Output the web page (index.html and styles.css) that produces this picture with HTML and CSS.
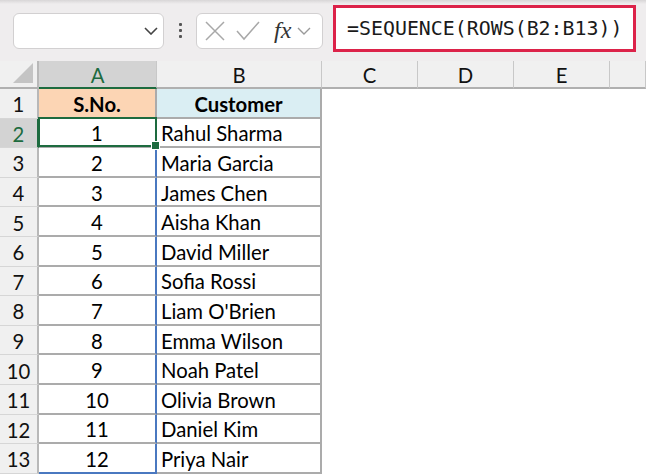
FILE: index.html
```html
<!DOCTYPE html>
<html lang="en">

<head>
	<meta charset="utf-8">
	<title>Sheet</title>
	<link rel="stylesheet" href="styles.css">
</head>

<body>
	<div class="toolbar">
		<div class="namebox">
			<svg class="chev" width="14" height="8" viewBox="0 0 14 8"><path d="M1 1 L7 7 L13 1" fill="none" stroke="#444" stroke-width="1.6"/></svg>
		</div>
		<div class="grip"><i></i><i></i><i></i></div>
		<div class="fxbox">
			<svg width="22" height="22" viewBox="0 0 22 22"><path d="M2 2 L20 20 M20 2 L2 20" stroke="#a8a8a8" stroke-width="1.5"/></svg>
			<svg width="24" height="22" viewBox="0 0 24 22"><path d="M1 11 L8 19 L23 2" fill="none" stroke="#a8a8a8" stroke-width="1.5"/></svg>
			<span class="fx">fx</span>
			<svg width="14" height="8" viewBox="0 0 14 8"><path d="M1 1 L7 7 L13 1" fill="none" stroke="#9a9a9a" stroke-width="1.4"/></svg>
		</div>
		<div class="formula">=SEQUENCE(ROWS(B2:B13))</div>
	</div>
	<div class="sheet" id="sheet">
		<div class="hd corner"><span class="tri"></span></div>
		<div class="hd col sel">A</div>
		<div class="hd col">B</div>
		<div class="hd col">C</div>
		<div class="hd col">D</div>
		<div class="hd col">E</div>
		<div class="hd col last"></div>
	</div>
	<script>
		var names = ["Rahul Sharma", "Maria Garcia", "James Chen", "Aisha Khan", "David Miller", "Sofia Rossi",
			"Liam O'Brien", "Emma Wilson", "Noah Patel", "Olivia Brown", "Daniel Kim", "Priya Nair"];
		var s = document.getElementById("sheet");
		function add(cls, txt) {
			var c = document.createElement("div");
			c.className = cls;
			c.textContent = txt || "";
			s.appendChild(c);
		}
		add("hd row", "1");
		add("cell a head1", "S.No.");
		add("cell b head2", "Customer");
		for (var k = 0; k < 4; k++) add("blank");
		for (var i = 0; i < names.length; i++) {
			var r = i + 2;
			add("hd row" + (r == 2 ? " sel" : ""), r);
			add("cell a spill" + (r == 2 ? " active" : "") + (r == 13 ? " end" : ""), i + 1);
			add("cell b", names[i]);
			for (var k = 0; k < 4; k++) add("blank");
		}
	</script>
</body>

</html>
```

FILE: styles.css
```css
body {
	margin: 0;
	width: 646px;
	height: 476px;
	overflow: hidden;
	background: #fff;
	font-family: Lato, "Liberation Sans", sans-serif;
	color: #000;
}

.toolbar {
	height: 61px;
	box-sizing: border-box;
	background: linear-gradient(#d8d6d7, #efedee 4px);
	display: flex;
	align-items: center;
	padding: 0 10px 0 13px;
}

.namebox {
	width: 151px;
	height: 36px;
	box-sizing: border-box;
	background: #fff;
	border: 1px solid #d2d0d1;
	border-radius: 6px;
	display: flex;
	align-items: center;
	justify-content: flex-end;
	padding-right: 5px;
}

.grip {
	width: 32px;
	display: flex;
	flex-direction: column;
	align-items: center;
	gap: 3px;
}

.grip i {
	width: 3px;
	height: 3px;
	background: #555;
	border-radius: 1px;
}

.fxbox {
	width: 127px;
	height: 36px;
	box-sizing: border-box;
	background: #fff;
	border: 1px solid #d2d0d1;
	border-radius: 6px;
	display: flex;
	align-items: center;
	padding-left: 7px;
	gap: 10px;
}

.fx {
	font-family: "Liberation Serif", serif;
	font-style: italic;
	font-size: 24px;
	color: #333;
	margin-left: 4px;
	margin-right: -4px;
}

.formula {
	margin-left: 10px;
	width: 303px;
	height: 47px;
	box-sizing: border-box;
	border: 3px solid #dc2249;
	background: #fff;
	font-family: "DejaVu Sans Mono", monospace;
	font-size: 19.9px;
	color: #1a1a1a;
	padding-left: 11px;
	line-height: 41px;
	align-self: flex-start;
	margin-top: 5px;
}

.sheet {
	display: grid;
	grid-template-columns: 39px 118px 165px 96px 96px 96px 36px;
	grid-template-rows: 28px repeat(13, 29.6px);
	font-size: 20.3px;
}

.hd {
	background: #f0f0f0;
	box-sizing: border-box;
	display: flex;
	align-items: center;
	justify-content: center;
	color: #111;
}

.corner {
	border-right: 2px solid #b8b8b8;
	border-bottom: 2px solid #b0b0b0;
	position: relative;
}

.tri {
	position: absolute;
	right: 4px;
	bottom: 4px;
	width: 0;
	height: 0;
	border-left: 20px solid transparent;
	border-bottom: 20px solid #c4c4c4;
}

.col {
	border-right: 1px solid #c8c8c8;
	border-bottom: 2px solid #b0b0b0;
	padding-top: 2px;
}

.col.sel {
	background: #d3d3d3;
	color: #1d6b3f;
	border-bottom-color: #1d6b3f;
}

.row {
	border-right: 2px solid #b8b8b8;
	border-bottom: 1px solid #d6d6d6;
	padding-top: 2px;
}

.row.sel {
	background: #d3d3d3;
	color: #1d6b3f;
	border-right-color: #1d6b3f;
}

.cell {
	box-sizing: border-box;
	border-right: 2px solid #ababab;
	border-bottom: 2px solid #ababab;
	display: flex;
	align-items: center;
	white-space: nowrap;
	padding-top: 2px;
}

.cell.a {
	justify-content: center;
}

.cell.b {
	padding-left: 4px;
}

.head1,
.head2 {
	font-weight: bold;
	justify-content: center;
}

.cell.head2 {
	padding-left: 0;
}

.head1 {
	background: #fcd5b4;
}

.head2 {
	background: #daeef3;
}

.spill {
	border-right-color: #4a78c0;
}

.spill.end {
	border-bottom-color: #4a78c0;
}

.active {
	position: relative;
}

.active::after {
	content: "";
	position: absolute;
	left: -1px;
	top: -2px;
	right: -2px;
	bottom: -1px;
	border: 2px solid #1d6b3f;
}

.active::before {
	content: "";
	position: absolute;
	right: -5px;
	bottom: -4px;
	width: 7px;
	height: 7px;
	background: #1d6b3f;
	border: 1px solid #fff;
	z-index: 2;
}
```
